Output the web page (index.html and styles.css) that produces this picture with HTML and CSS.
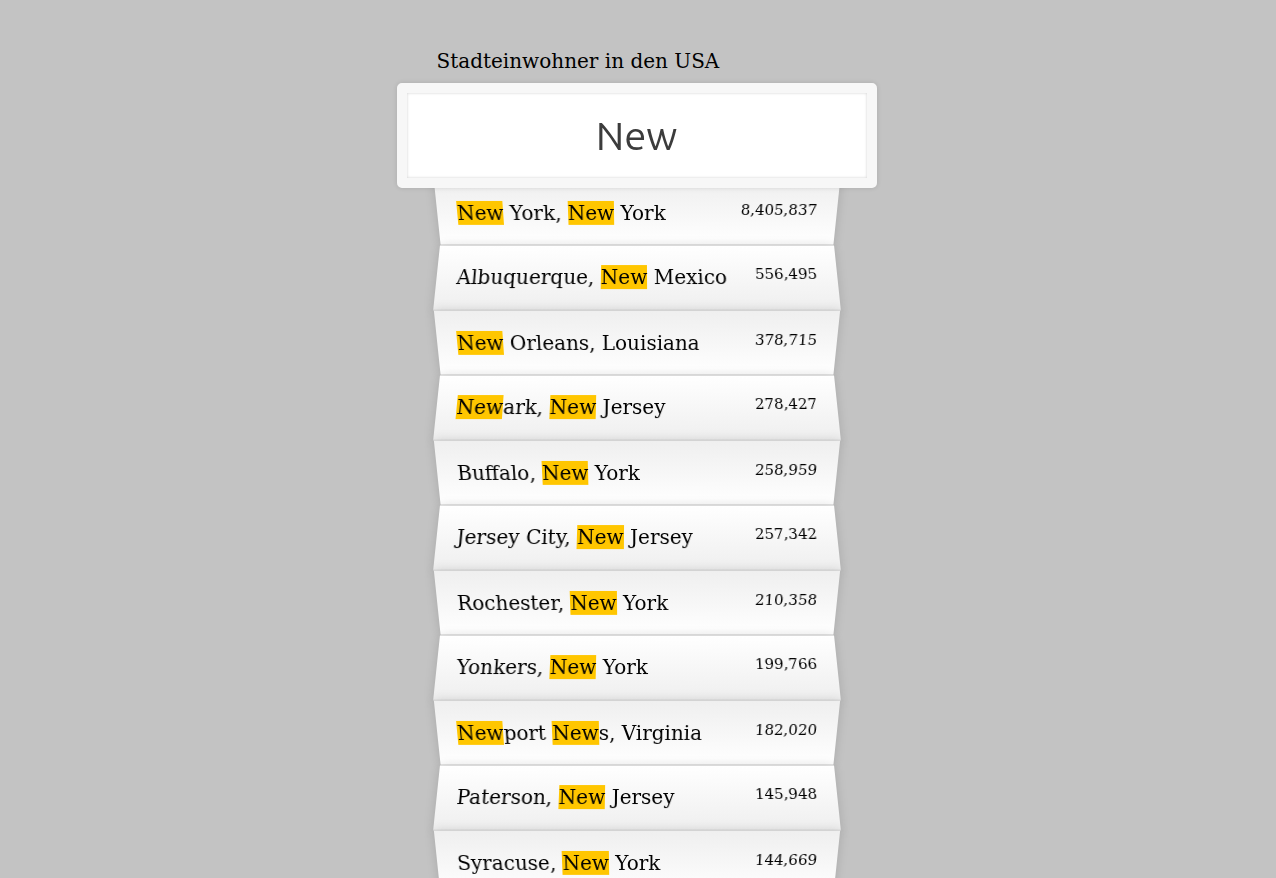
FILE: index.html
```html
<!DOCTYPE html>
<html lang="de">
<head>
<meta charset="utf-8">
<title>Stadteinwohner in den USA</title>
<link rel="stylesheet" href="styles.css">
</head>
<body>
<form class="search-form">
<label for="search">Stadteinwohner in den USA</label>
<input type="text" id="search" class="search" value="New" autocomplete="off">
<ul class="suggestions">
<li><span class="name"><span class="hl">New</span> York, <span class="hl">New</span> York</span><span class="population">8,405,837</span></li>
<li><span class="name">Albuquerque, <span class="hl">New</span> Mexico</span><span class="population">556,495</span></li>
<li><span class="name"><span class="hl">New</span> Orleans, Louisiana</span><span class="population">378,715</span></li>
<li><span class="name"><span class="hl">New</span>ark, <span class="hl">New</span> Jersey</span><span class="population">278,427</span></li>
<li><span class="name">Buffalo, <span class="hl">New</span> York</span><span class="population">258,959</span></li>
<li><span class="name">Jersey City, <span class="hl">New</span> Jersey</span><span class="population">257,342</span></li>
<li><span class="name">Rochester, <span class="hl">New</span> York</span><span class="population">210,358</span></li>
<li><span class="name">Yonkers, <span class="hl">New</span> York</span><span class="population">199,766</span></li>
<li><span class="name"><span class="hl">New</span>port <span class="hl">New</span>s, Virginia</span><span class="population">182,020</span></li>
<li><span class="name">Paterson, <span class="hl">New</span> Jersey</span><span class="population">145,948</span></li>
<li><span class="name">Syracuse, <span class="hl">New</span> York</span><span class="population">144,669</span></li>
</ul>
</form>
</body>
</html>
```

FILE: styles.css
```css
html {
  box-sizing: border-box;
  background: #c3c3c3;
  font-family: "DejaVu Serif", serif;
  font-size: 20px;
}

*, *::before, *::after {
  box-sizing: inherit;
}

body {
  margin: 0;
  height: 100vh;
  padding-right: 3px;
  overflow: hidden;
}

.search-form {
  max-width: 400px;
  margin: 0 auto;
  padding-top: 49px;
}

.search {
  display: block;
  position: relative;
  z-index: 2;
  width: 120%;
  margin: 10px -10% 0;
  padding: 20px;
  border: 10px solid #f7f7f7;
  border-radius: 5px;
  outline: 0;
  color: #3c3c3c;
  font-family: Ubuntu, "Noto Sans", sans-serif;
  font-size: 40px;
  font-weight: 450;
  line-height: 45px;
  text-align: center;
  box-shadow: 0 0 5px rgba(0, 0, 0, 0.12), inset 0 0 3px rgba(0, 0, 0, 0.19);
}

.suggestions {
  margin: -10px 0 0;
  padding: 0;
}

.suggestions li {
  display: flex;
  justify-content: space-between;
  padding: 20px;
  border-bottom: 1px solid #d8d8d8;
  box-shadow: 0 0 10px rgba(0, 0, 0, 0.14);
  list-style: none;
}

.suggestions li:nth-child(even) {
  transform: perspective(100px) rotateX(3deg) translateY(2px) scale(1.001);
  background: linear-gradient(to bottom, #fff 0%, #efefef 100%);
}

.suggestions li:nth-child(odd) {
  transform: perspective(100px) rotateX(-3deg) translateY(3px);
  background: linear-gradient(to top, #fff 0%, #efefef 100%);
}

.population {
  font-size: 15px;
}

.hl {
  background: #ffc600;
}
```
